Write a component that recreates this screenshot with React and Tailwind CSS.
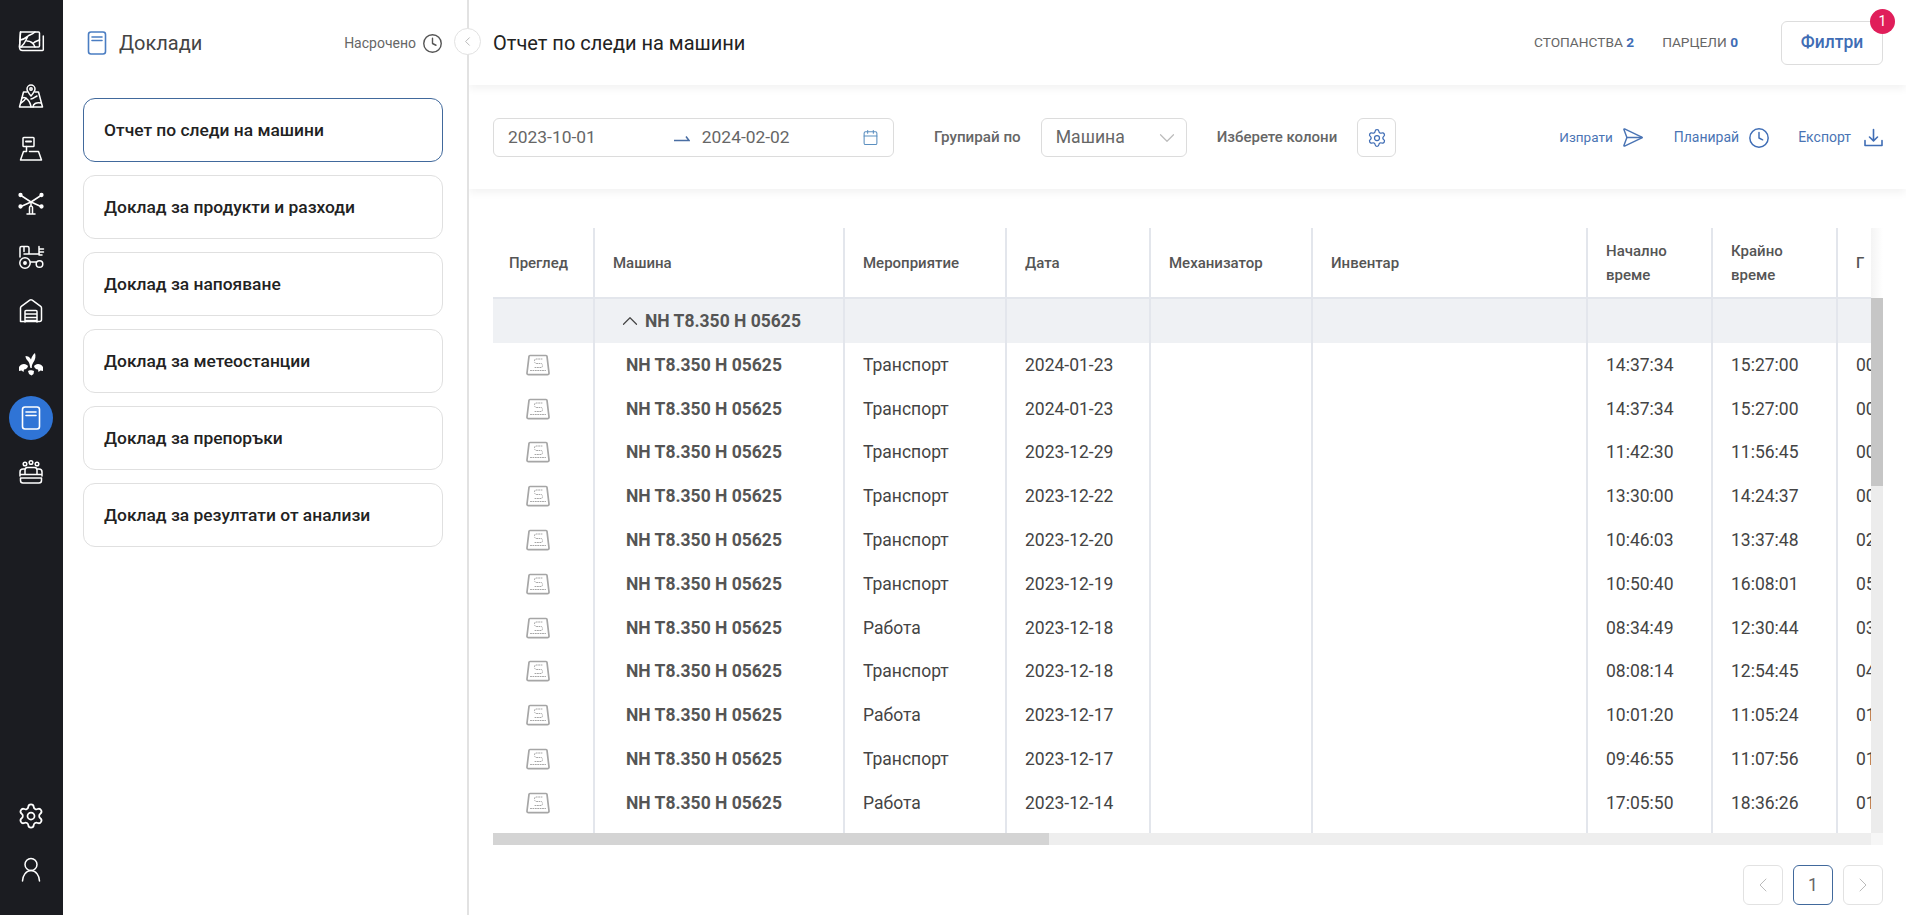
import { Calendar, ChevronDown, ChevronLeft, ChevronRight, ChevronUp, Clock, Settings, SendHorizontal } from "lucide-react";

const reports = [
  "Отчет по следи на машини",
  "Доклад за продукти и разходи",
  "Доклад за напояване",
  "Доклад за метеостанции",
  "Доклад за препоръки",
  "Доклад за резултати от анализи",
];

const rows = [
  ["Транспорт", "2024-01-23", "14:37:34", "15:27:00", "00:49:26"],
  ["Транспорт", "2024-01-23", "14:37:34", "15:27:00", "00:49:26"],
  ["Транспорт", "2023-12-29", "11:42:30", "11:56:45", "00:14:15"],
  ["Транспорт", "2023-12-22", "13:30:00", "14:24:37", "00:54:37"],
  ["Транспорт", "2023-12-20", "10:46:03", "13:37:48", "02:51:45"],
  ["Транспорт", "2023-12-19", "10:50:40", "16:08:01", "05:17:21"],
  ["Работа", "2023-12-18", "08:34:49", "12:30:44", "03:55:55"],
  ["Транспорт", "2023-12-18", "08:08:14", "12:54:45", "04:46:31"],
  ["Работа", "2023-12-17", "10:01:20", "11:05:24", "01:04:04"],
  ["Транспорт", "2023-12-17", "09:46:55", "11:07:56", "01:21:01"],
  ["Работа", "2023-12-14", "17:05:50", "18:36:26", "01:30:36"],
];

function NavSvg({ children }) {
  return (
    <svg width="28" height="28" viewBox="0 0 28 28" fill="none" stroke="#fff" strokeWidth="1.5" strokeLinecap="round" strokeLinejoin="round">
      {children}
    </svg>
  );
}

function ReportIcon({ color = "#fff", className = "" }) {
  return (
    <svg className={className} width="20" height="24" viewBox="0 0 20 24" fill="none" stroke={color} strokeWidth="1.6" strokeLinecap="round">
      <rect x="1.5" y="1" width="17" height="22" rx="2.5" />
      <path d="M5 6h10M5 9.5h10" />
    </svg>
  );
}

function FieldIcon() {
  return (
    <svg width="26" height="22" viewBox="0 0 26 22" fill="none" stroke="#a6a6a6" strokeLinecap="round" strokeLinejoin="round">
      <path d="M5 1.500h16a1 1 0 0 1 1 0.900l2 16.600a1.500 1.500 0 0 1-1.500 1.700h-19a1.500 1.500 0 0 1-1.500-1.700l2-16.600a1 1 0 0 1 1-0.900z" strokeWidth="1.700" />
      <path d="M5.500 16.500h15M17 5h-6q-1.500 0-1.500 2t1.500 2.500h5q1.500 0 1.500 2t-1.500 2h-7" strokeWidth="1" strokeDasharray="1 1.400" />
    </svg>
  );
}

function NavItem({ children, active }) {
  return (
    <div className="h-[53.75px] flex items-center justify-center pr-px">
      <div className={`w-11 h-11 rounded-full flex items-center justify-center ${active ? "bg-[#2f74d6]" : ""}`}>
        {children}
      </div>
    </div>
  );
}

function Sidebar() {
  return (
    <div className="w-[63px] shrink-0 bg-[#1b1c21] flex flex-col pt-[15px] pb-[18px]">
      <NavItem>
        <NavSvg>
          <path d="M3.500 4h18a1 1 0 0 1 1 1v13a1 1 0 0 1-1 1h-19z" />
          <path d="M5.500 22.500h20a0.800 0.800 0 0 0 0.800-0.800v-13.700M2.500 19c0 2 1 3.500 3 3.500M3.500 4l-1 15" />
          <path d="M3 12c3.500 0 5.500-2 8-4 1.500-1 4-1.500 7-4M11 8l-2 4c-1 2.500-3 5-5 7M10 13c3 0 6 1 8 6M22.500 12c-2 1-4 1-6 3" />
        </NavSvg>
      </NavItem>
      <NavItem>
        <NavSvg>
          <path d="M14 14c-2.500-3-4-5-4-7a4 4 0 0 1 8 0c0 2-1.500 4-4 7z" />
          <circle cx="14" cy="7" r="1.200" />
          <path d="M10 10h-3.500l-4 15h23l-4-15h-3.500" />
          <path d="M5 16c3-1 4 0 6 2s3 6 3 7M4 21c2-1 4-3 5-5M16 25c0-3 3-5 8-4M14 17c2 0 4-2 6-3" />
        </NavSvg>
      </NavItem>
      <NavItem>
        <NavSvg>
          <rect x="6" y="2.500" width="11" height="9" rx="0.800" />
          <path d="M9 6.500h5" strokeWidth="2" />
          <path d="M9.500 11.500v5h-3l-3 8.500h21l-3-8.500h-9" />
        </NavSvg>
      </NavItem>
      <NavItem>
        <NavSvg>
          <path d="M14 13l-10-6.500M14 13l10-6.500M14 13l-10 4.500M14 13l10 4.500" />
          <circle cx="3.500" cy="6" r="1.400" fill="#fff" />
          <circle cx="24.500" cy="6" r="1.400" fill="#fff" />
          <circle cx="3.500" cy="17.500" r="1.400" fill="#fff" />
          <circle cx="24.500" cy="17.500" r="1.400" fill="#fff" />
          <path d="M12.500 25v-6.500a1.500 1.500 0 0 1 3 0v6.500M10 25h8M14 13v4" />
        </NavSvg>
      </NavItem>
      <NavItem>
        <NavSvg>
          <path d="M3 14v-9a1.500 1.500 0 0 1 1.500-1.500h6a1.500 1.500 0 0 1 1.500 1.500v6h10M7 3.500v5M11 11h-4" />
          <path d="M22 3.500v7.500M22 6h4.500M22 9h4.500M22 12h3" />
          <circle cx="8" cy="20" r="5.200" />
          <circle cx="8" cy="20" r="1.200" fill="#fff" />
          <circle cx="22.500" cy="21" r="3.300" />
          <path d="M13.500 19h5.500" />
        </NavSvg>
      </NavItem>
      <NavItem>
        <NavSvg>
          <path d="M3.500 24.500v-13.500a2 2 0 0 1 0.800-1.600l8.500-6.300a2 2 0 0 1 2.400 0l8.500 6.300a2 2 0 0 1 0.800 1.600v11.500a2 2 0 0 1-2 2h-18.500a0.500 0.500 0 0 1-0.500-0.500z" />
          <path d="M8 25v-10.500a1 1 0 0 1 1-1h10a1 1 0 0 1 1 1v10.500M8 17h12M8 20.500h12M8 23.500h12" />
        </NavSvg>
      </NavItem>
      <NavItem>
        <svg width="28" height="28" viewBox="0 0 28 28" fill="#fff">
          <path d="M13.500 18c-1-3-0.500-5-3.500-8-1-1-1.500-3-1.500-4 2 0 4.500 1 5.500 3.500 0.500-2.500 2-5 4-6.500 1 3 0.500 7-2 10-1 1.500-1.200 3-1.200 5z" />
          <path d="M2 17c1-2 3-3 5-3 2 0 3 1 4 2-0.500 2-2 3.500-4 3.500l-0.500 2.500-2-1.500-2.500 0.500z" />
          <path d="M26 17c-1-2-3-3-5-3-2 0-3 1-4 2 0.500 2 2 3.500 4 3.500l0.500 2.500 2-1.500 2.500 0.500z" />
          <path d="M11 21c1-1 4.500-1 6 0l-0.500 3-2 1.500-2.500-1.500z" />
        </svg>
      </NavItem>
      <NavItem active>
        <ReportIcon />
      </NavItem>
      <NavItem>
        <NavSvg>
          <circle cx="8" cy="6" r="1.800" />
          <circle cx="14" cy="4.500" r="1.800" />
          <circle cx="20" cy="6" r="1.800" />
          <path d="M3 18v-4a3 3 0 0 1 3-3h2M25 18v-4a3 3 0 0 0-3-3h-2M8 16v-4a2.500 2.500 0 0 1 2.500-2.500h7a2.500 2.500 0 0 1 2.500 2.500v4M3 16.500h22" />
          <path d="M3.500 20h21v2.500a2.500 2.500 0 0 1-2.500 2.500h-16a2.500 2.500 0 0 1-2.500-2.500z" />
        </NavSvg>
      </NavItem>
      <div className="mt-auto">
        <NavItem>
          <Settings size={28} color="#fff" strokeWidth={1.5} />
        </NavItem>
        <NavItem>
          <NavSvg>
            <circle cx="14" cy="8.500" r="6" />
            <path d="M5.500 25c0-5 3.500-10.500 8.500-10.500s8.500 5.500 8.500 10.500" />
          </NavSvg>
        </NavItem>
      </div>
    </div>
  );
}

function ReportsPanel() {
  return (
    <div className="relative w-[406px] shrink-0 border-r-2 border-[#e2e2e2] pl-5 pr-6 z-20 bg-white">
      <div className="h-[98px] flex items-center pb-3">
        <ReportIcon color="#4a7dc2" className="ml-1" />
        <span className="ml-3 text-[20px] text-[#444]">Доклади</span>
        <span className="ml-auto text-[14px] text-[#666]">Насрочено</span>
        <Clock size={21} color="#555" strokeWidth={1.6} className="ml-[6px]" />
      </div>
      <div className="flex flex-col gap-[13px]">
        {reports.map((name, i) => (
          <div
            key={name}
            className={`h-[64px] rounded-xl border flex items-center pl-[20px] text-[17.4px] font-medium text-[#222] ${
              i === 0 ? "border-[#41699c]" : "border-[#e0e0e0]"
            }`}
          >
            {name}
          </div>
        ))}
      </div>
      {/* Collapse button */}
      <button className="absolute top-[28px] right-[-14px] w-[27px] h-[27px] rounded-full bg-white border border-[#e2e2e2] flex items-center justify-center">
        <ChevronLeft size={15} color="#aaa" strokeWidth={1.3} />
      </button>
    </div>
  );
}

function Header() {
  return (
    <div className="relative z-10 h-[85px] shrink-0 bg-white shadow-[0_4px_8px_rgba(0,0,0,0.05)] flex items-center pl-6 pr-[23px]">
      <h1 className="text-[20px] text-[#222]">Отчет по следи на машини</h1>
      <span className="ml-auto text-[13.7px] text-[#666] uppercase">
        Стопанства <b className="font-bold text-[#3f6db5]">2</b>
      </span>
      <span className="ml-7 text-[13.7px] text-[#666] uppercase">
        Парцели <b className="font-bold text-[#3f6db5]">0</b>
      </span>
      <div className="relative ml-[43px]">
        <button className="w-[102px] h-11 rounded-md border border-[#ddd] bg-white text-[17.5px] font-medium text-[#3f6db5]">
          Филтри
        </button>
        <span className="absolute -top-[12px] -right-[12px] w-[25px] h-[25px] rounded-full bg-[#e01e5a] text-white text-[14px] flex items-center justify-center">
          1
        </span>
      </div>
    </div>
  );
}

function Toolbar() {
  return (
    <div className="h-[104px] shrink-0 bg-white shadow-[0_4px_8px_rgba(0,0,0,0.05)] flex items-start pt-[33px] pl-6 pr-[23px]">
      <div className="w-[401px] h-[39px] rounded-md border border-[#dcdcdc] flex items-center pl-[14px] pr-[14px] text-[17.4px] text-[#666]">
        <span>2023-10-01</span>
        <svg className="ml-[78px]" width="16" height="8" viewBox="0 0 16 8" fill="none" stroke="#4a6ea3" strokeWidth="1.5">
          <path d="M0 6.500h15l-3-4" />
        </svg>
        <span className="ml-3">2024-02-02</span>
        <Calendar size={17} color="#5b8fc0" strokeWidth={1.5} className="ml-auto" />
      </div>
      <span className="ml-[40px] h-[39px] leading-[39px] text-[15.2px] font-medium text-[#666]">Групирай по</span>
      <div className="ml-[20px] w-[146px] h-[39px] rounded-md border border-[#dcdcdc] flex items-center pl-[14px] pr-[6px] text-[17.6px] text-[#666]">
        Машина
        <ChevronDown size={26} color="#bbb" strokeWidth={1.1} className="ml-auto" />
      </div>
      <span className="ml-[30px] h-[39px] leading-[39px] text-[15px] font-medium text-[#666]">Изберете колони</span>
      <button className="ml-[20px] w-[39px] h-[39px] rounded-md border border-[#dcdcdc] flex items-center justify-center">
        <Settings size={20} color="#3f6db5" strokeWidth={1.5} />
      </button>
      <div className="ml-auto h-[39px] flex items-center text-[14px] text-[#4a74b4]">
        <span className="text-[13.5px]">Изпрати</span>
        <SendHorizontal size={23} color="#4a74b4" strokeWidth={1.5} className="ml-2" />
        <span className="ml-[30px]">Планирай</span>
        <Clock size={22} color="#3f6db5" strokeWidth={1.6} className="ml-[9px]" />
        <span className="ml-[28px]">Експорт</span>
        <svg className="ml-[13px]" width="19" height="20" viewBox="0 0 19 20" fill="none" stroke="#3f6db5" strokeWidth="1.600" strokeLinecap="round" strokeLinejoin="round">
          <path d="M9.500 1.500v11M5.500 9l4 3.800 4-3.800M1 12.500v5h17v-5" />
        </svg>
      </div>
    </div>
  );
}

const cellLine = "border-l-2 border-[#e3e6ec]";

function ReportTable() {
  return (
    <div className="mt-[39px] ml-6 mr-[23px]">
      <div className="flex">
        <div className="flex-1 min-w-0 h-[605px] overflow-hidden">
          <table className="table-fixed w-[1503px] border-collapse text-left">
            <colgroup>
              <col className="w-[101px]" />
              <col className="w-[250px]" />
              <col className="w-[162px]" />
              <col className="w-[144px]" />
              <col className="w-[162px]" />
              <col className="w-[275px]" />
              <col className="w-[125px]" />
              <col className="w-[125px]" />
              <col className="w-[159px]" />
            </colgroup>
            <thead>
              <tr className="h-[70px] text-[15px] leading-6 font-medium text-[#555] border-b-2 border-[#e3e6ec]">
                <th className="pl-4 font-medium">Преглед</th>
                <th className={`pl-[18px] font-medium ${cellLine}`}>Машина</th>
                <th className={`pl-[18px] font-medium ${cellLine}`}>Мероприятие</th>
                <th className={`pl-[18px] font-medium ${cellLine}`}>Дата</th>
                <th className={`pl-[18px] font-medium ${cellLine}`}>Механизатор</th>
                <th className={`pl-[18px] font-medium ${cellLine}`}>Инвентар</th>
                <th className={`pl-[18px] pr-4 font-medium ${cellLine}`}>Начално време</th>
                <th className={`pl-[18px] pr-4 font-medium ${cellLine}`}>Крайно време</th>
                <th className={`pl-[18px] font-medium ${cellLine}`}>Г</th>
              </tr>
            </thead>
            <tbody className="text-[17.5px] text-[#444]">
              <tr className="h-[45px] bg-[#eff1f4]">
                <td />
                <td className={`pl-[22px] ${cellLine}`}>
                  <span className="flex items-center gap-[2px] font-bold text-[#555]">
                    <ChevronUp size={26} color="#444" strokeWidth={1.1} />
                    NH T8.350 H 05625
                  </span>
                </td>
                <td className={cellLine} />
                <td className={cellLine} />
                <td className={cellLine} />
                <td className={cellLine} />
                <td className={cellLine} />
                <td className={cellLine} />
                <td className={cellLine} />
              </tr>
              {rows.map((r, i) => (
                <tr key={i} className="h-[43.8px]">
                  <td>
                    <div className="flex justify-center pr-[11px]">
                      <FieldIcon />
                    </div>
                  </td>
                  <td className={`pl-[31px] font-bold text-[#555] ${cellLine}`}>NH T8.350 H 05625</td>
                  <td className={`pl-[18px] ${cellLine}`}>{r[0]}</td>
                  <td className={`pl-[18px] ${cellLine}`}>{r[1]}</td>
                  <td className={cellLine} />
                  <td className={cellLine} />
                  <td className={`pl-[18px] ${cellLine}`}>{r[2]}</td>
                  <td className={`pl-[18px] ${cellLine}`}>{r[3]}</td>
                  <td className={`pl-[18px] ${cellLine}`}>{r[4]}</td>
                </tr>
              ))}
              <tr className="h-[10px]">
                <td />
                <td className={cellLine} />
                <td className={cellLine} />
                <td className={cellLine} />
                <td className={cellLine} />
                <td className={cellLine} />
                <td className={cellLine} />
                <td className={cellLine} />
                <td className={cellLine} />
              </tr>
            </tbody>
          </table>
        </div>
        {/* Vertical scrollbar */}
        <div className="w-3 shrink-0 flex flex-col">
          <div className="h-[70px] bg-gradient-to-r from-[#f4f4f4] to-white" />
          <div className="flex-1 bg-[#ececec]">
            <div className="h-[188px] bg-[#c6c6c6]" />
          </div>
        </div>
      </div>
      {/* Horizontal scrollbar */}
      <div className="flex h-3">
        <div className="flex-1 bg-[#eeeeee]">
          <div className="w-[556px] h-full bg-[#d4d4d4]" />
        </div>
        <div className="w-3 bg-[#f6f6f6]" />
      </div>
    </div>
  );
}

function Pagination() {
  return (
    <div className="mt-5 mr-[23px] flex justify-end gap-[10px]">
      <button className="w-10 h-10 rounded-md border border-[#e2e2e2] flex items-center justify-center">
        <ChevronLeft size={24} color="#bbb" strokeWidth={1} />
      </button>
      <button className="w-10 h-10 rounded-md border border-[#41699c] text-[17.5px] text-[#666]">1</button>
      <button className="w-10 h-10 rounded-md border border-[#e2e2e2] flex items-center justify-center">
        <ChevronRight size={24} color="#bbb" strokeWidth={1} />
      </button>
    </div>
  );
}

export default function App() {
  return (
    <div className="h-screen flex overflow-hidden bg-white font-['Roboto','Noto_Sans',sans-serif]">
      <Sidebar />
      <ReportsPanel />
      <div className="flex-1 min-w-0 flex flex-col">
        <Header />
        <Toolbar />
        <ReportTable />
        <Pagination />
      </div>
    </div>
  );
}
